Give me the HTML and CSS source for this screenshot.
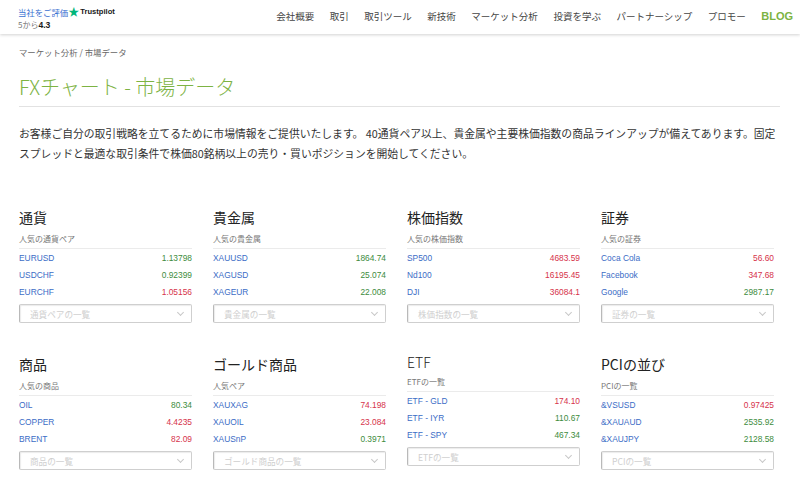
FILE: index.html
```html
<!DOCTYPE html>
<html lang="ja">
<head>
<meta charset="utf-8">
<title>FXチャート - 市場データ</title>
<link rel="stylesheet" href="styles.css">
</head>
<body>
<header class="topbar">
  <div class="tp">
    <div class="tp-line1"><span class="tp-rate">当社をご評価</span><span class="tp-star">★</span><span class="tp-name">Trustpilot</span></div>
    <div class="tp-line2"><span class="tp-of">5から</span><span class="tp-score">4.3</span></div>
  </div>
  <nav class="nav">
    <a>会社概要</a>
    <a>取引</a>
    <a>取引ツール</a>
    <a>新技術</a>
    <a>マーケット分析</a>
    <a>投資を学ぶ</a>
    <a>パートナーシップ</a>
    <a>プロモー</a>
    <a class="nav-blog">BLOG</a>
  </nav>
</header>

<main class="main">
  <div class="crumb">マーケット分析 / 市場データ</div>
  <h1 class="title">FXチャート - 市場データ</h1>
  <p class="intro">お客様ご自分の取引戦略を立てるために市場情報をご提供いたします。 40通貨ペア以上、貴金属や主要株価指数の商品ラインアップが備えてあります。固定<br>スプレッドと最適な取引条件で株価80銘柄以上の売り・買いポジションを開始してください。</p>

  <section class="grid">
    <div class="card">
      <h2 class="card-h">通貨</h2>
      <div class="card-sub">人気の通貨ペア</div>
      <ul class="rows">
        <li><span class="sym">EURUSD</span><span class="up">1.13798</span></li>
        <li><span class="sym">USDCHF</span><span class="up">0.92399</span></li>
        <li><span class="sym">EURCHF</span><span class="down">1.05156</span></li>
      </ul>
      <div class="select"><span>通貨ペアの一覧</span><i class="chev"></i></div>
    </div>
    <div class="card">
      <h2 class="card-h">貴金属</h2>
      <div class="card-sub">人気の貴金属</div>
      <ul class="rows">
        <li><span class="sym">XAUUSD</span><span class="up">1864.74</span></li>
        <li><span class="sym">XAGUSD</span><span class="up">25.074</span></li>
        <li><span class="sym">XAGEUR</span><span class="up">22.008</span></li>
      </ul>
      <div class="select"><span>貴金属の一覧</span><i class="chev"></i></div>
    </div>
    <div class="card">
      <h2 class="card-h">株価指数</h2>
      <div class="card-sub">人気の株価指数</div>
      <ul class="rows">
        <li><span class="sym">SP500</span><span class="down">4683.59</span></li>
        <li><span class="sym">Nd100</span><span class="down">16195.45</span></li>
        <li><span class="sym">DJI</span><span class="down">36084.1</span></li>
      </ul>
      <div class="select"><span>株価指数の一覧</span><i class="chev"></i></div>
    </div>
    <div class="card">
      <h2 class="card-h">証券</h2>
      <div class="card-sub">人気の証券</div>
      <ul class="rows">
        <li><span class="sym">Coca Cola</span><span class="down">56.60</span></li>
        <li><span class="sym">Facebook</span><span class="down">347.68</span></li>
        <li><span class="sym">Google</span><span class="up">2987.17</span></li>
      </ul>
      <div class="select"><span>証券の一覧</span><i class="chev"></i></div>
    </div>

    <div class="card">
      <h2 class="card-h">商品</h2>
      <div class="card-sub">人気の商品</div>
      <ul class="rows">
        <li><span class="sym">OIL</span><span class="up">80.34</span></li>
        <li><span class="sym">COPPER</span><span class="down">4.4235</span></li>
        <li><span class="sym">BRENT</span><span class="down">82.09</span></li>
      </ul>
      <div class="select"><span>商品の一覧</span><i class="chev"></i></div>
    </div>
    <div class="card">
      <h2 class="card-h">ゴールド商品</h2>
      <div class="card-sub">人気ペア</div>
      <ul class="rows">
        <li><span class="sym">XAUXAG</span><span class="down">74.198</span></li>
        <li><span class="sym">XAUOIL</span><span class="down">23.084</span></li>
        <li><span class="sym">XAUSnP</span><span class="up">0.3971</span></li>
      </ul>
      <div class="select"><span>ゴールド商品の一覧</span><i class="chev"></i></div>
    </div>
    <div class="card">
      <h2 class="card-h card-h-latin">ETF</h2>
      <div class="card-sub">ETFの一覧</div>
      <ul class="rows">
        <li><span class="sym">ETF - GLD</span><span class="down">174.10</span></li>
        <li><span class="sym">ETF - IYR</span><span class="up">110.67</span></li>
        <li><span class="sym">ETF - SPY</span><span class="up">467.34</span></li>
      </ul>
      <div class="select"><span>ETFの一覧</span><i class="chev"></i></div>
    </div>
    <div class="card">
      <h2 class="card-h">PCIの並び</h2>
      <div class="card-sub">PCIの一覧</div>
      <ul class="rows">
        <li><span class="sym">&amp;VSUSD</span><span class="down">0.97425</span></li>
        <li><span class="sym">&amp;XAUAUD</span><span class="up">2535.92</span></li>
        <li><span class="sym">&amp;XAUJPY</span><span class="up">2128.58</span></li>
      </ul>
      <div class="select"><span>PCIの一覧</span><i class="chev"></i></div>
    </div>
  </section>
</main>
</body>
</html>
```

FILE: styles.css
```css
* { box-sizing: border-box; }
html, body { margin: 0; padding: 0; background: #fff; }
body {
  font-family: "Liberation Sans", "Noto Sans CJK JP", sans-serif;
  color: #333;
  width: 800px;
  height: 482px;
  overflow: hidden;
}

/* header */
.topbar {
  height: 34px;
  display: flex;
  align-items: center;
  justify-content: space-between;
  padding: 0 7px 0 18px;
  background: #fff;
  box-shadow: 0 1px 3px rgba(0,0,0,0.18);
  position: relative;
}
.tp { display: flex; flex-direction: column; gap: 1px; margin-top: 1px; }
.tp-line1 { display: flex; align-items: center; height: 12px; }
.tp-rate { font-family: "Noto Sans CJK JP", sans-serif; font-size: 8.4px; color: #3a6fd0; }
.tp-star { color: #00b67a; font-size: 11px; margin: 0 1px 0 0; line-height: 10px; }
.tp-name { font-family: "Liberation Sans", sans-serif; font-size: 7.6px; font-weight: bold; color: #191919; }
.tp-line2 { display: flex; align-items: baseline; height: 11px; }
.tp-of { font-family: "Noto Sans CJK JP", sans-serif; font-size: 8px; color: #777; }
.tp-score { font-family: "Liberation Sans", sans-serif; font-size: 8.6px; font-weight: bold; color: #191919; }

.nav { display: flex; align-items: center; gap: 15.5px; margin-top: -3px; }
.nav a {
  font-family: "Noto Sans CJK JP", sans-serif;
  font-size: 9.5px;
  color: #444;
  text-decoration: none;
  line-height: 14px;
}
.nav .nav-blog {
  font-family: "Liberation Sans", sans-serif;
  font-size: 11px;
  font-weight: bold;
  color: #7cb342;
}

/* main */
.main { padding: 12px 20px 0 19px; }
.crumb {
  font-family: "Noto Sans CJK JP", sans-serif;
  font-size: 8.4px;
  line-height: 12px;
  color: #666;
}
.title {
  margin: 15px 0 0 0;
  padding-bottom: 5px;
  border-bottom: 1px solid #e2e2e2;
  font-family: "Noto Sans CJK JP", sans-serif;
  font-weight: 300;
  font-size: 20px;
  line-height: 28px;
  color: #7db343;
}
.intro {
  margin: 16px 0 0 0;
  font-family: "Noto Sans CJK JP", sans-serif;
  font-size: 10.8px;
  line-height: 20px;
  color: #333;
  white-space: nowrap;
}

/* grid */
.grid {
  margin-top: 44px;
  display: grid;
  grid-template-columns: repeat(4, 173px);
  column-gap: 21px;
  row-gap: 31px;
}
.card { display: flex; flex-direction: column; }
.card-h {
  margin: 0;
  font-family: "Noto Sans CJK JP", sans-serif;
  font-weight: 400;
  font-size: 14px;
  line-height: 20px;
  color: #222;
}
.card-h-latin { line-height: 16px; font-weight: 300; }
.card-sub {
  margin-top: 6px;
  padding-bottom: 3px;
  border-bottom: 1px solid #ebebeb;
  font-family: "Noto Sans CJK JP", sans-serif;
  font-size: 8px;
  line-height: 12px;
  color: #777;
}
.rows { list-style: none; margin: 0; padding: 1px 0 0 0; }
.rows li {
  display: flex;
  justify-content: space-between;
  font-size: 8.4px;
  line-height: 17px;
  height: 17px;
}
.sym { color: #3b6cc6; }
.up { color: #3d8c3d; }
.down { color: #d6334b; }

.select {
  margin-top: 3px;
  height: 19px;
  border: 1px solid #cfcfcf;
  border-left-color: #b9b9b9;
  border-radius: 2px;
  box-shadow: inset 1px 1px 1px rgba(0,0,0,0.08);
  display: flex;
  align-items: center;
  justify-content: space-between;
  padding: 0 8px 0 10px;
}
.select span {
  font-family: "Noto Sans CJK JP", sans-serif;
  font-size: 8.6px;
  color: #cfcfcf;
}
.chev {
  width: 5px;
  height: 5px;
  border-right: 1px solid #c8c8c8;
  border-bottom: 1px solid #c8c8c8;
  transform: rotate(45deg);
  margin-top: -2px;
}
```
